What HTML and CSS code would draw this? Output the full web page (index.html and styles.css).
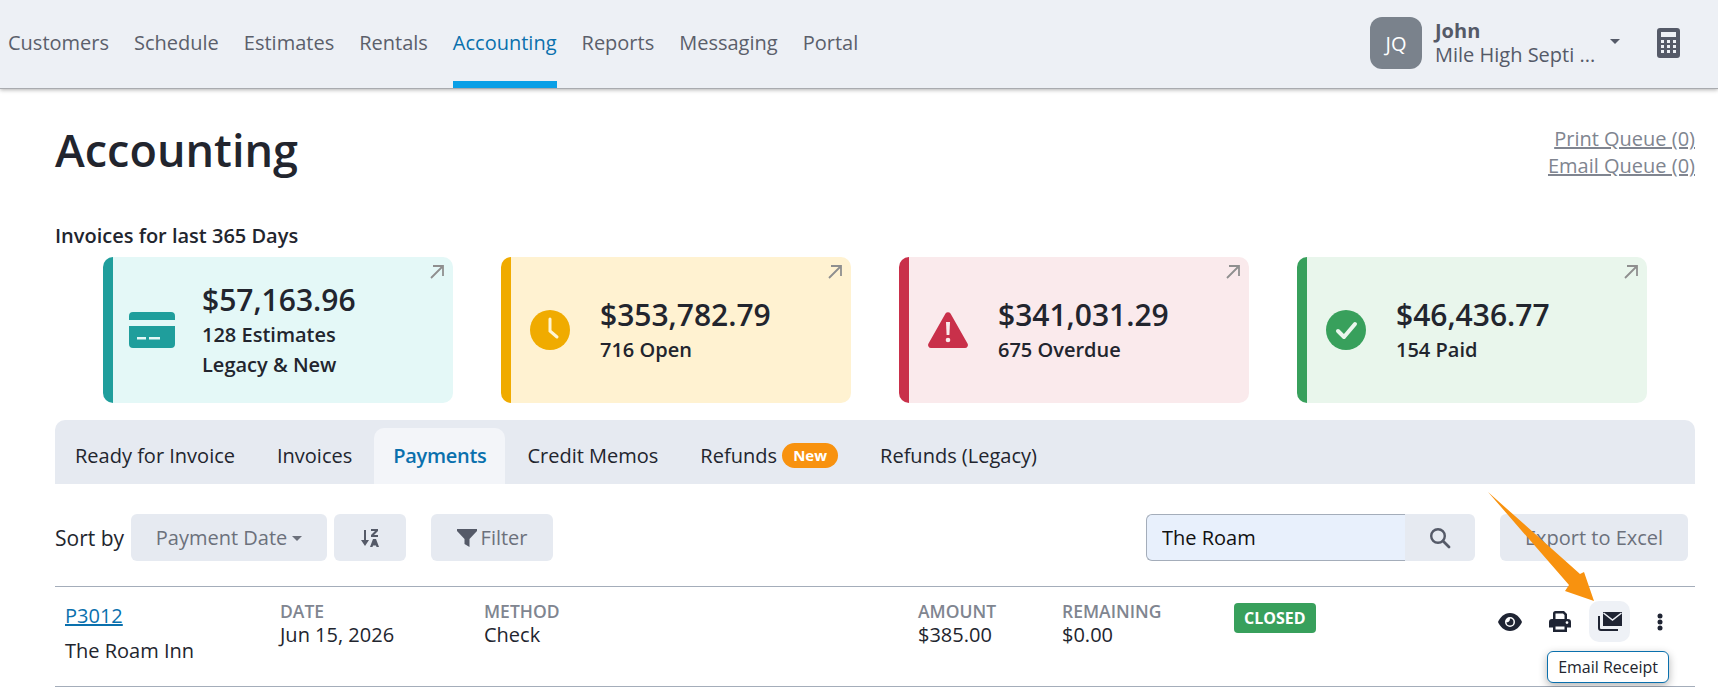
FILE: index.html
```html
<!DOCTYPE html>
<html lang="en">
<head>
    <meta charset="UTF-8">
    <title>Accounting</title>
    <link rel="stylesheet" href="styles.css">
</head>
<body>
    <div class="navbar">
        <div class="nav-links">
            <a href="#">Customers</a>
            <a href="#">Schedule</a>
            <a href="#">Estimates</a>
            <a href="#">Rentals</a>
            <a href="#" class="active">Accounting</a>
            <a href="#">Reports</a>
            <a href="#">Messaging</a>
            <a href="#">Portal</a>
        </div>
        <div class="user">
            <div class="avatar">JQ</div>
            <div class="user-text">
                <div class="user-name">John</div>
                <div class="user-company">Mile High Septi ...</div>
            </div>
            <span class="user-caret"></span>
            <svg class="calc" viewBox="0 0 23 30"><path fill="#555a68" fill-rule="evenodd" d="M3 0h17a3 3 0 0 1 3 3v24a3 3 0 0 1-3 3H3a3 3 0 0 1-3-3V3a3 3 0 0 1 3-3zm1 4v5h15V4zm0 8v3h3v-3zm6 0v3h3v-3zm6 0v3h3v-3zM4 17v3h3v-3zm6 0v3h3v-3zm6 0v3h3v-3zM4 22v3h3v-3zm6 0v3h3v-3zm6 0v3h3v-3z"/></svg>
        </div>
    </div>

    <div class="content">
        <div class="page-head">
            <h1>Accounting</h1>
            <div class="queues">
                <a href="#">Print Queue (0)</a>
                <a href="#">Email Queue (0)</a>
            </div>
        </div>

        <div class="cards-title">Invoices for last 365 Days</div>
        <div class="cards">
            <div class="card teal">
                <svg class="card-icon" viewBox="0 0 46 36"><path fill="#1f9e9c" d="M4 0h38a4 4 0 0 1 4 4v4H0V4a4 4 0 0 1 4-4zM0 14h46v18a4 4 0 0 1-4 4H4a4 4 0 0 1-4-4z"/><path fill="#e4f8f7" d="M8 25h9v2.500H8zM20 25h11v2.500H20z"/></svg>
                <div>
                    <div class="amount">$57,163.96</div>
                    <div class="card-sub">128 Estimates</div>
                    <div class="card-sub">Legacy &amp; New</div>
                </div>
                <svg class="card-link" viewBox="0 0 14 14"><path fill="none" stroke="#8f8f8f" stroke-width="1.800" d="M1 13 13 1M3 1h10v10"/></svg>
            </div>
            <div class="card yellow">
                <svg class="card-icon" viewBox="0 0 40 40"><circle cx="20" cy="20" r="20" fill="#f0ab00"/><path fill="none" stroke="#fff5d3" stroke-width="3" stroke-linecap="round" d="M20 9v12l7 6"/></svg>
                <div>
                    <div class="amount">$353,782.79</div>
                    <div class="card-sub">716 Open</div>
                </div>
                <svg class="card-link" viewBox="0 0 14 14"><path fill="none" stroke="#8f8f8f" stroke-width="1.800" d="M1 13 13 1M3 1h10v10"/></svg>
            </div>
            <div class="card red">
                <svg class="card-icon warn" viewBox="0 0 40 36"><path fill="#c9304a" d="M17.500 1.500a3 3 0 0 1 5 0l17 30a3 3 0 0 1-2.500 4.500H3a3 3 0 0 1-2.500-4.500z"/><path fill="#faeaec" d="M18 10h4l-.6 13h-2.800z"/><circle cx="20" cy="28" r="2.300" fill="#faeaec"/></svg>
                <div>
                    <div class="amount">$341,031.29</div>
                    <div class="card-sub">675 Overdue</div>
                </div>
                <svg class="card-link" viewBox="0 0 14 14"><path fill="none" stroke="#8f8f8f" stroke-width="1.800" d="M1 13 13 1M3 1h10v10"/></svg>
            </div>
            <div class="card green">
                <svg class="card-icon" viewBox="0 0 40 40"><circle cx="20" cy="20" r="20" fill="#38a05c"/><path fill="none" stroke="#eaf6ee" stroke-width="4" stroke-linecap="round" stroke-linejoin="round" d="M12 21l6 6 11-13"/></svg>
                <div>
                    <div class="amount">$46,436.77</div>
                    <div class="card-sub">154 Paid</div>
                </div>
                <svg class="card-link" viewBox="0 0 14 14"><path fill="none" stroke="#8f8f8f" stroke-width="1.800" d="M1 13 13 1M3 1h10v10"/></svg>
            </div>
        </div>

        <div class="tabs">
            <a href="#" class="tab">Ready for Invoice</a>
            <a href="#" class="tab">Invoices</a>
            <a href="#" class="tab active">Payments</a>
            <a href="#" class="tab">Credit Memos</a>
            <a href="#" class="tab">Refunds <span class="badge-new">New</span></a>
            <a href="#" class="tab">Refunds (Legacy)</a>
        </div>

        <div class="toolbar">
            <span class="sort-label">Sort by</span>
            <button class="btn sort-field">Payment Date <span class="btn-caret"></span></button>
            <button class="btn sort-dir">
                <svg width="20" height="20" viewBox="0 0 20 20"><path fill="none" stroke="#555a68" stroke-width="2" d="M5 2v14"/><path fill="#555a68" d="M1 12h8l-4 6zM11 1h7v2l-4 4h4v2h-7V7l4-4h-4zM13 11h3l3 8h-2.500l-.5-1.500h-3l-.5 1.500H10z"/></svg>
            </button>
            <button class="btn filter">
                <svg width="20" height="20" viewBox="0 0 20 20"><path fill="#555a68" d="M0 1h20v2l-7.500 8v8l-5-3v-5L0 3z"/></svg>
                Filter
            </button>
            <div class="search">
                <input class="search-input" type="text" value="The Roam">
                <button class="search-btn">
                    <svg width="22" height="22" viewBox="0 0 22 22"><circle cx="9" cy="9" r="6.800" fill="none" stroke="#555a68" stroke-width="2.400"/><path stroke="#555a68" stroke-width="2.800" stroke-linecap="round" d="M14 14l6 6"/></svg>
                </button>
            </div>
            <button class="btn export">Export to Excel</button>
        </div>

        <div class="row">
            <div>
                <a href="#" class="row-link">P3012</a>
                <div class="row-name">The Roam Inn</div>
            </div>
            <div><div class="row-label">DATE</div>Jun 15, 2026</div>
            <div><div class="row-label">METHOD</div>Check</div>
            <div><div class="row-label">AMOUNT</div>$385.00</div>
            <div><div class="row-label">REMAINING</div>$0.00</div>
            <div><span class="status">CLOSED</span></div>
            <div class="actions">
                <button class="action">
                    <svg width="24" height="18" viewBox="0 0 24 18"><path fill="#1f2433" fill-rule="evenodd" d="M12 0c6 0 10 4.500 12 9-2 4.500-6 9-12 9S2 13.500 0 9c2-4.500 6-9 12-9zm0 4a5 5 0 1 0 0 10 5 5 0 0 0 0-10z"/><path fill="#1f2433" d="M12 5.500a3.500 3.500 0 1 1-3.500 3.500c1.300.8 3.500-.4 3.500-3.500z"/></svg>
                </button>
                <button class="action">
                    <svg width="22" height="21" viewBox="0 0 22 21"><path fill="#1f2433" fill-rule="evenodd" d="M6.500 0h8.500l3 3v5h-2.500V4l-1.500-1.500H6.500V8H4V2.500A2.500 2.500 0 0 1 6.500 0zM3 8h16a3 3 0 0 1 3 3v5.500h-4V21H4v-4.500H0V11a3 3 0 0 1 3-3zm3.500 7.500V18.500h9v-3zm11.500-5.300a1.400 1.400 0 1 0 0 2.800 1.400 1.400 0 0 0 0-2.800z"/></svg>
                </button>
                <button class="action hovered">
                    <svg width="24" height="19" viewBox="0 0 24 19"><path fill="#1f2433" d="M5 0h19v14H5z"/><path fill="none" stroke="#eef1f6" stroke-width="1.500" d="M5.500 1 14.500 8l9-7"/><path fill="none" stroke="#1f2433" stroke-width="2" d="M1 4v12a2 2 0 0 0 2 2h17"/></svg>
                </button>
                <button class="action">
                    <svg width="6" height="18" viewBox="0 0 6 18"><circle cx="3" cy="3" r="2.500" fill="#1f2433"/><circle cx="3" cy="9" r="2.500" fill="#1f2433"/><circle cx="3" cy="15" r="2.500" fill="#1f2433"/></svg>
                </button>
            </div>
            <div class="tooltip">Email Receipt</div>
        </div>
    </div>

    <!-- annotation arrow drawn over the page -->
    <svg class="annotation" width="140" height="120" viewBox="0 0 140 120"><path fill="#f8920f" d="M0 0 92 82 96 80 106 109 77 99 81 93z"/></svg>
</body>
</html>
```

FILE: styles.css
```css
body {
    font-family: "Open Sans", sans-serif;
    background-color: #fff;
    color: #22252e;
    margin: 0;
    font-size: 20px;
    position: relative;
    overflow: hidden;
}

a {
    color: inherit;
}

button {
    font-family: inherit;
}

.navbar {
    height: 89px;
    box-sizing: border-box;
    display: flex;
    justify-content: space-between;
    background: #edf0f5;
    padding-left: 8px;
    border-bottom: 1px solid #a9abaf;
    box-shadow: 0 1px 4px rgba(0, 0, 0, 0.3);
}

.nav-links {
    display: flex;
    gap: 25px;
}

.nav-links a {
    color: #5b5f6b;
    text-decoration: none;
    line-height: 86px;
    font-size: 20px;
    height: 88px;
    box-sizing: border-box;
}

.nav-links a.active {
    color: #0a70ad;
    border-bottom: 7px solid #0a9fe6;
}

.user {
    display: flex;
    align-items: center;
    padding-right: 38px;
    padding-bottom: 2px;
}

.avatar {
    width: 52px;
    height: 52px;
    border-radius: 12px;
    background: #7a828c;
    color: #fff;
    font-size: 20px;
    display: flex;
    align-items: center;
    justify-content: center;
}

.user-text {
    width: 175px;
    margin-left: 13px;
    color: #555a68;
    line-height: 24px;
}

.user-name {
    font-weight: 700;
}

.user-caret {
    border-left: 5px solid transparent;
    border-right: 5px solid transparent;
    border-top: 5px solid #555a68;
    margin-bottom: 3px;
}

.calc {
    width: 23px;
    height: 30px;
    margin-left: 37px;
}

.content {
    padding: 0 23px 0 55px;
}

.page-head {
    display: flex;
    justify-content: space-between;
    height: 135px;
}

h1 {
    margin: 30px 0 0;
    font-size: 45px;
    font-weight: 600;
    line-height: 62px;
}

.queues {
    display: flex;
    flex-direction: column;
    align-items: flex-end;
    padding-top: 36px;
    line-height: 27px;
    color: #808590;
}

.cards-title {
    font-weight: 600;
    line-height: 24px;
}

.cards {
    display: flex;
    gap: 48px;
    margin: 9px 0 0 48px;
}

.card {
    position: relative;
    width: 350px;
    height: 146px;
    box-sizing: border-box;
    display: flex;
    align-items: center;
    border-left: 10px solid;
    border-radius: 10px;
}

.card.teal { background: #e4f8f7; border-color: #1f9e9c; }
.card.yellow { background: #fff2d1; border-color: #f0ab00; }
.card.red { background: #faeaec; border-color: #c9304a; }
.card.green { background: #e9f6ec; border-color: #38a05c; }

.card-icon {
    width: 46px;
    height: 40px;
    margin: 0 27px 0 16px;
    flex-shrink: 0;
}

.card-icon.warn {
    height: 36px;
}

.amount {
    font-size: 30px;
    font-weight: 600;
    line-height: 40px;
}

.card-sub {
    font-weight: 600;
    line-height: 30px;
}

.card-link {
    position: absolute;
    top: 8px;
    right: 9px;
    width: 14px;
    height: 14px;
}

.tabs {
    display: flex;
    gap: 2px;
    height: 64px;
    box-sizing: border-box;
    margin-top: 17px;
    padding-top: 8px;
    background: #e6eaf1;
    border-radius: 10px 10px 0 0;
}

.tab {
    padding: 0 20px;
    line-height: 55px;
    text-decoration: none;
    border-radius: 10px 10px 0 0;
}

.tab.active {
    background: #f3f5f9;
    color: #0a70ad;
    font-weight: 600;
    letter-spacing: -0.3px;
    padding: 0 19px;
}

.badge-new {
    display: inline-block;
    background: #f8920f;
    color: #fff;
    font-size: 15px;
    font-weight: 700;
    line-height: 25px;
    padding: 0 11px;
    border-radius: 13px;
    vertical-align: 2px;
}

.toolbar {
    display: flex;
    align-items: center;
    height: 47px;
    margin: 30px 7px 0 0;
}

.sort-label {
    font-size: 21px;
    margin-right: 7px;
}

.btn {
    height: 47px;
    border: none;
    border-radius: 6px;
    background: #e6eaf1;
    color: #6c717c;
    font-size: 20px;
    display: flex;
    align-items: center;
    justify-content: center;
}

.sort-field {
    width: 196px;
    gap: 5px;
}

.btn-caret {
    border-left: 5px solid transparent;
    border-right: 5px solid transparent;
    border-top: 5px solid #6c717c;
    margin-top: 2px;
}

.sort-dir {
    width: 72px;
    margin-left: 7px;
}

.filter {
    width: 122px;
    gap: 4px;
    margin-left: 25px;
}

.search {
    display: flex;
    margin-left: auto;
}

.search-input {
    width: 259px;
    height: 47px;
    box-sizing: border-box;
    border: 1px solid #a4adba;
    border-right: none;
    border-radius: 6px 0 0 6px;
    background: #e8f0fc;
    color: #111;
    font-family: inherit;
    font-size: 20px;
    padding: 0 15px;
}

.search-btn {
    width: 70px;
    height: 47px;
    border: none;
    border-radius: 0 6px 6px 0;
    background: #e6eaf1;
    display: flex;
    align-items: center;
    justify-content: center;
}

.export {
    width: 188px;
    margin-left: 25px;
}

.row {
    position: relative;
    height: 101px;
    box-sizing: border-box;
    display: grid;
    grid-template-columns: 215px 204px 434px 144px 172px 150px 1fr;
    margin-top: 25px;
    padding: 13px 15px 0 10px;
    border-top: 1px solid #a4adba;
    border-bottom: 1px solid #a4adba;
    line-height: 24px;
}

.row-link {
    color: #0a70ad;
    display: block;
    line-height: 26px;
    padding-top: 3px;
}

.row-name {
    margin-top: 10px;
}

.row-label {
    font-size: 17.500px;
    font-weight: 600;
    line-height: 23px;
    color: #808590;
}

.status {
    display: inline-block;
    margin-top: 3px;
    padding: 0 10px;
    background: #38a05c;
    color: #fff;
    font-size: 16px;
    font-weight: 700;
    line-height: 30px;
    border-radius: 4px;
}

.actions {
    display: flex;
    justify-content: flex-end;
    gap: 9px;
    height: 41px;
    margin-top: 1px;
}

.action {
    width: 41px;
    height: 41px;
    padding: 0;
    border: none;
    border-radius: 10px;
    background: none;
    display: flex;
    align-items: center;
    justify-content: center;
}

.action.hovered {
    background: #eef1f6;
}

.tooltip {
    position: absolute;
    top: 64px;
    right: 26px;
    padding: 0 10px;
    line-height: 30px;
    font-size: 16px;
    background: #fff;
    border: 1px solid #0a70ad;
    border-radius: 6px;
    box-shadow: 0 3px 8px rgba(0, 0, 0, 0.3);
}

.annotation {
    position: absolute;
    top: 492px;
    left: 1488px;
}
```
